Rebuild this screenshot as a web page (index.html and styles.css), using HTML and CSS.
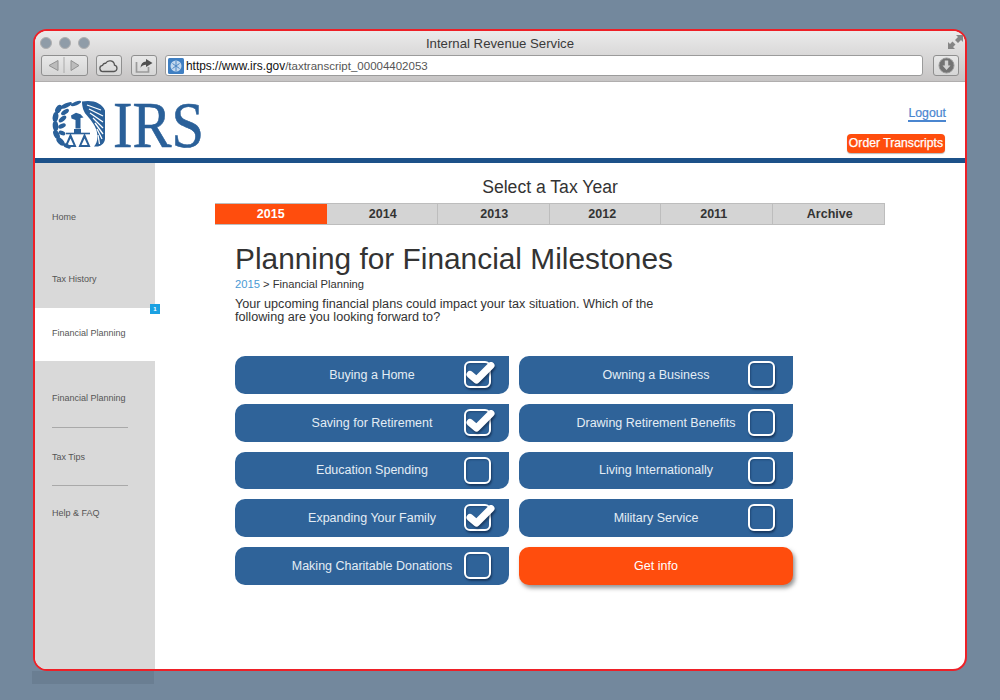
FILE: index.html
```html
<!DOCTYPE html>
<html lang="en">
<head>
<meta charset="utf-8">
<title>Internal Revenue Service</title>
<link rel="stylesheet" href="styles.css">
</head>
<body>
<div class="window">
  <div class="chrome">
    <div class="title-row">
      <div class="lights"><i class="light"></i><i class="light"></i><i class="light"></i></div>
      <div class="title">Internal Revenue Service</div>
      <svg class="expand" width="15" height="14" viewBox="0 0 15 14"><path d="M8 0h7v7l-2-2-3 3-3-3 3-3zM0 14V7l2 2 2.500-2.500 3 3L5 12l2 2z" fill="#858585"/></svg>
    </div>
    <div class="tool-row">
      <div class="tbtn nav-btn">
        <svg width="47" height="21" viewBox="0 0 47 21"><path d="M17 5.500v10L8 10.500z" fill="#bcbcbc" stroke="#929292"/><path d="M23 2v16" stroke="#aaa"/><path d="M30 5.500v10l8-5z" fill="#bcbcbc" stroke="#929292"/></svg>
      </div>
      <div class="tbtn cloud-btn">
        <svg width="20" height="15" viewBox="0 0 20 15"><path d="M4.500 13.500h10.500a3.200 3.200 0 0 0 .5-6.300 4.700 4.700 0 0 0-8.800-1.900A2.800 2.800 0 0 0 3.600 7.300a3.100 3.100 0 0 0 .9 6.200z" fill="none" stroke="#555" stroke-width="1.300"/></svg>
      </div>
      <div class="tbtn share-btn">
        <svg width="18" height="14" viewBox="0 0 18 14"><path d="M1.500 3v10h12V8" fill="none" stroke="#9a9a9a" stroke-width="1.700"/><path d="M11 0l6.500 4L11 8V5.800c-2.500 0-4 .8-5.500 3C5.800 4.800 7.700 2.600 11 2.400z" fill="#4f4f4f"/></svg>
      </div>
      <div class="url-bar">
        <svg class="favicon" width="16" height="16" viewBox="0 0 16 16"><rect width="16" height="16" rx="1.500" fill="#3f7fc2"/><circle cx="8" cy="8" r="5.500" fill="#c3d8ee"/><path d="M4.500 5.500l7 5M4.500 10.500l7-5M8 3v10" stroke="#4d86c4"/></svg>
        <span class="url-host">https://www.irs.gov</span><span class="url-path">/taxtranscript_00004402053</span>
      </div>
      <div class="tbtn dl-btn">
        <svg width="17" height="17" viewBox="0 0 17 17"><circle cx="8.500" cy="8.500" r="7.500" fill="#737373" stroke="#9a9a9a"/><path d="M6.800 3.500h3.400v5h2.300l-4 4.500-4-4.500h2.300z" fill="#d2d2d2"/></svg>
      </div>
    </div>
  </div>

  <header class="site-header">
    <div class="logo">
      <svg class="seal" width="54" height="50" viewBox="0 0 54 50" fill="#2a6099">
        <g>
          <ellipse cx="14" cy="5.500" rx="6.500" ry="2.200" transform="rotate(-25 14 5.500)"/>
          <ellipse cx="24" cy="3.500" rx="5.500" ry="1.800" transform="rotate(-22 24 3.500)"/>
          <ellipse cx="6.500" cy="9" rx="4.500" ry="2.800" transform="rotate(-60 6.500 9)"/>
          <ellipse cx="13" cy="12" rx="4.500" ry="2.200" transform="rotate(-35 13 12)"/>
          <ellipse cx="3.500" cy="17" rx="5" ry="2.800" transform="rotate(-80 3.500 17)"/>
          <ellipse cx="10.500" cy="19" rx="4.500" ry="2.300" transform="rotate(-40 10.500 19)"/>
          <ellipse cx="3.500" cy="26" rx="5" ry="2.800" transform="rotate(85 3.500 26)"/>
          <ellipse cx="10" cy="26" rx="4" ry="2.200" transform="rotate(-25 10 26)"/>
          <ellipse cx="4.500" cy="34.500" rx="5" ry="2.800" transform="rotate(65 4.500 34.500)"/>
          <ellipse cx="10" cy="33" rx="3.500" ry="2.100" transform="rotate(20 10 33)"/>
          <ellipse cx="8.500" cy="41.500" rx="5" ry="2.800" transform="rotate(45 8.500 41.500)"/>
          <ellipse cx="15" cy="46" rx="4" ry="2" transform="rotate(25 15 46)"/>
        </g>
        <path d="M19 15.500l5-2.800 4.500 1.500 3 3.300-3 .5v10.500h-5v-8.500l-4-1.500z"/>
        <path d="M22 29h7v4h-7z"/>
        <path d="M14 33.500h24" stroke="#2a6099" stroke-width="1.600"/>
        <path d="M18.500 33l-6 14h12zM18.500 38.500l-3 6.500h6zM32.500 33l-6 14h12zM32.500 38.500l-3 6.500h6z" fill-rule="evenodd"/>
        <path d="M30 1.500c10-2 20 1 23 9v28c0 4-3 7-7 8h-4c3-3 4-8 3-14-1-6-5-11-10-17-3-3-5-8-5-14z"/>
        <path d="M35 5l14 5M37 9l14 7M38 13l13 9M41 18l10 10M43 23l8 11M45 29l5 10M46 35l1.500 9" stroke="#fff" stroke-width="1.300" fill="none"/>
      </svg>
      <span class="logo-text">IRS</span>
    </div>
    <div class="header-actions">
      <a class="logout">Logout</a>
      <a class="order">Order Transcripts</a>
    </div>
  </header>
  <div class="rule"></div>

  <div class="body-row">
    <nav class="sidebar">
      <div class="nav-item nav-home">Home</div>
      <div class="nav-item nav-history">Tax History</div>
      <div class="nav-item nav-active">Financial Planning<span class="badge">1</span></div>
      <div class="nav-item nav-plan">Financial Planning</div>
      <div class="nav-sep nav-sep-a"></div>
      <div class="nav-item nav-tips">Tax Tips</div>
      <div class="nav-sep nav-sep-b"></div>
      <div class="nav-item nav-help">Help &amp; FAQ</div>
    </nav>
    <main class="content">
      <h2 class="year-title">Select a Tax Year</h2>
      <div class="tabs">
        <div class="tab tab-on">2015</div>
        <div class="tab tab-r">2014</div>
        <div class="tab tab-r">2013</div>
        <div class="tab tab-l">2012</div>
        <div class="tab tab-l">2011</div>
        <div class="tab tab-last">Archive</div>
      </div>
      <div class="inner">
        <h1 class="headline">Planning for Financial Milestones</h1>
        <div class="crumbs"><span class="crumb-link">2015</span> &gt; Financial Planning</div>
        <p class="intro">Your upcoming financial plans could impact your tax situation. Which of the<br>following are you looking forward to?</p>
        <div class="choices">
          <div class="choice"><span class="choice-label">Buying a Home</span><span class="box"><svg class="tick" width="30" height="26" viewBox="0 0 30 26"><path d="M5 13.500l6.500 5.500L26 4.500" fill="none" stroke="#fff" stroke-width="7" stroke-linecap="round" stroke-linejoin="round"/></svg></span></div>
          <div class="choice"><span class="choice-label">Owning a Business</span><span class="box"></span></div>
          <div class="choice"><span class="choice-label">Saving for Retirement</span><span class="box"><svg class="tick" width="30" height="26" viewBox="0 0 30 26"><path d="M5 13.500l6.500 5.500L26 4.500" fill="none" stroke="#fff" stroke-width="7" stroke-linecap="round" stroke-linejoin="round"/></svg></span></div>
          <div class="choice"><span class="choice-label">Drawing Retirement Benefits</span><span class="box"></span></div>
          <div class="choice"><span class="choice-label">Education Spending</span><span class="box"></span></div>
          <div class="choice"><span class="choice-label">Living Internationally</span><span class="box"></span></div>
          <div class="choice"><span class="choice-label">Expanding Your Family</span><span class="box"><svg class="tick" width="30" height="26" viewBox="0 0 30 26"><path d="M5 13.500l6.500 5.500L26 4.500" fill="none" stroke="#fff" stroke-width="7" stroke-linecap="round" stroke-linejoin="round"/></svg></span></div>
          <div class="choice"><span class="choice-label">Military Service</span><span class="box"></span></div>
          <div class="choice"><span class="choice-label">Making Charitable Donations</span><span class="box"></span></div>
          <div class="get-info">Get info</div>
        </div>
      </div>
    </main>
  </div>
</div>
</body>
</html>
```

FILE: styles.css
```css
* { box-sizing: border-box; }
html, body { margin: 0; height: 100%; }
body {
  background: #73889d;
  padding: 29px 32px 0 33px;
  font-family: "Liberation Sans", Arial, sans-serif;
  color: #333;
  overflow: hidden;
}
.window {
  position: relative;
  width: 934px;
  height: 642px;
  background: #fff;
  border: 2px solid #ee2027;
  border-radius: 14px;
  display: flex;
  flex-direction: column;
}
.window::after {
  content: "";
  position: absolute;
  left: -3px;
  top: 640px;
  width: 122px;
  height: 13px;
  background: #6a7e92;
}
.chrome {
  height: 51px;
  background: linear-gradient(#ebebeb, #c6c4c4);
  border-bottom: 1px solid #b0aeae;
  border-radius: 12px 12px 0 0;
  padding: 0 6px;
}
.title-row {
  height: 24px;
  display: flex;
  align-items: center;
  position: relative;
  justify-content: center;
}
.lights { position: absolute; left: -1px; top: 6px; display: flex; gap: 7px; }
.light {
  width: 12px; height: 12px; border-radius: 50%;
  background: #8f9ca8; border: 1px solid #b0b0b0;
}
.title { font-size: 13.200px; color: #3a3a3a; }
.expand { position: absolute; right: -4px; top: 4px; }
.tool-row { display: flex; height: 21px; }
.tbtn {
  height: 21px;
  border: 1px solid #8f8f8f;
  border-radius: 3px;
  background: linear-gradient(#e8e8e8, #d6d6d6);
  display: flex;
  align-items: center;
  justify-content: center;
}
.tbtn svg { flex: none; }
.nav-btn { width: 47px; }
.cloud-btn { width: 26px; margin-left: 8px; }
.share-btn { width: 26px; margin-left: 9px; }
.dl-btn { width: 26px; margin-left: 10px; }
.url-bar {
  width: 758px;
  margin-left: 8px;
  height: 21px;
  background: #fff;
  border: 1px solid #9b9b9b;
  border-radius: 3px;
  display: flex;
  align-items: center;
  font-size: 11.900px;
  padding-left: 2px;
  white-space: nowrap;
}
.favicon { margin-right: 2px; flex: none; }
.url-host { color: #111; }
.url-path { color: #555; font-size: 11.500px; }

.site-header {
  height: 76px;
  display: flex;
  justify-content: space-between;
  padding: 0 19px 0 17px;
}
.logo { display: flex; align-items: flex-start; padding-top: 18px; }
.seal { flex: none; }
.logo-text {
  display: inline-block;
  font-family: "Liberation Serif", serif;
  font-size: 66px;
  line-height: 49px;
  color: #2a6099;
  margin-left: 7px;
  transform: scaleX(.885);
  transform-origin: left center;
  -webkit-text-stroke: 0.6px #2a6099;
}
.header-actions { display: flex; flex-direction: column; align-items: flex-end; }
.logout {
  margin-top: 24px;
  font-size: 12.300px;
  color: #4a86d0;
  line-height: 14px;
  border-bottom: 2px solid #4a86d0;
  -webkit-text-stroke: 0.2px #4a86d0;
}
.order {
  margin-top: 12px;
  height: 19px;
  margin-right: 1px;
  line-height: 19px;
  padding: 0 2px;
  border-radius: 4px;
  background: #ff4d0d;
  color: #fff;
  font-size: 12.200px;
  box-shadow: 0 1px 1px #bbb;
  -webkit-text-stroke: 0.25px #fff;
}
.rule { height: 5px; background: #1c5189; flex: none; }

.body-row { flex: 1; display: flex; min-height: 0; }
.sidebar {
  width: 120px;
  flex: none;
  background: #d9d9d9;
  border-bottom-left-radius: 12px;
  font-size: 9px;
  color: #555;
}
.nav-item { padding-left: 17px; line-height: 14px; }
.nav-home { margin-top: 47px; }
.nav-history { margin-top: 48px; }
.nav-active {
  position: relative;
  margin-top: 22px;
  height: 53px;
  line-height: 50px;
  background: #fff;
}
.badge {
  position: absolute;
  right: -5px;
  top: -4px;
  width: 10px;
  height: 10px;
  background: #1ba1e2;
  color: #fff;
  font-size: 6px;
  font-weight: 700;
  line-height: 10px;
  text-align: center;
}
.nav-plan { margin-top: 30px; }
.nav-sep { height: 1px; background: #a9a9a9; margin: 0 27px 0 17px; }
.nav-sep-a { margin-top: 22px; }
.nav-sep-b { margin-top: 21px; }
.nav-tips { margin-top: 22px; }
.nav-help { margin-top: 20px; }

.content { flex: 1; min-width: 0; padding: 14px 0 0 60px; }
.year-title {
  margin: 0 0 5px;
  width: 670px;
  text-align: center;
  font-size: 17.600px;
  font-weight: 400;
  line-height: 21px;
  color: #333;
}
.tabs {
  width: 670px;
  height: 22px;
  display: flex;
  background: #d4d4d4;
  border-top: 1px solid #bdbdbd;
  border-bottom: 1px solid #bdbdbd;
  border-right: 1px solid #bdbdbd;
}
.tab {
  flex: 0 0 111.500px;
  text-align: center;
  font-size: 12.500px;
  font-weight: 700;
  line-height: 20px;
  color: #333;
  border-right: 1px solid #bdbdbd;
}
.tab-r { padding-left: 2px; }
.tab-l { padding-right: 5px; }
.tab-last { flex: 1; border-right: 0; padding-left: 3px; }
.tab-on { background: #ff4d0d; color: #fff; border-right: 0; }
.inner { padding: 17px 0 0 20px; }
.headline {
  margin: 0;
  font-size: 29.850px;
  font-weight: 400;
  line-height: 34px;
  color: #333;
}
.crumbs { font-size: 11.200px; line-height: 15px; margin-top: 1px; color: #333; }
.crumb-link { color: #4a9ad4; }
.intro { margin: 6px 0 0; font-size: 12.650px; line-height: 13px; color: #333; }
.choices {
  display: grid;
  grid-template-columns: 274px 274px;
  grid-auto-rows: 37.750px;
  column-gap: 10px;
  row-gap: 10px;
  margin-top: 32px;
}
.choice {
  position: relative;
  background: #2f6399;
  border-radius: 10px 0 10px 10px;
  display: flex;
  align-items: center;
}
.choice-label {
  flex: 1;
  text-align: center;
  color: #e4edf5;
  font-size: 12.500px;
}
.box {
  position: absolute;
  left: 229px;
  top: 5px;
  width: 27px;
  height: 27px;
  border: 2.500px solid #fff;
  border-radius: 6px;
  box-shadow: 1px 2px 2px rgba(10, 30, 60, .6), inset 1px 1px 2px rgba(10, 30, 60, .35);
}
.tick {
  position: absolute;
  left: -1px;
  top: -2px;
  filter: drop-shadow(1px 2px 1px rgba(10, 30, 60, .6));
}
.get-info {
  background: #ff4d0d;
  border-radius: 10px;
  color: #fff;
  font-size: 12.500px;
  display: flex;
  align-items: center;
  justify-content: center;
  box-shadow: 2px 3px 4px rgba(60, 60, 60, .55);
}
```
